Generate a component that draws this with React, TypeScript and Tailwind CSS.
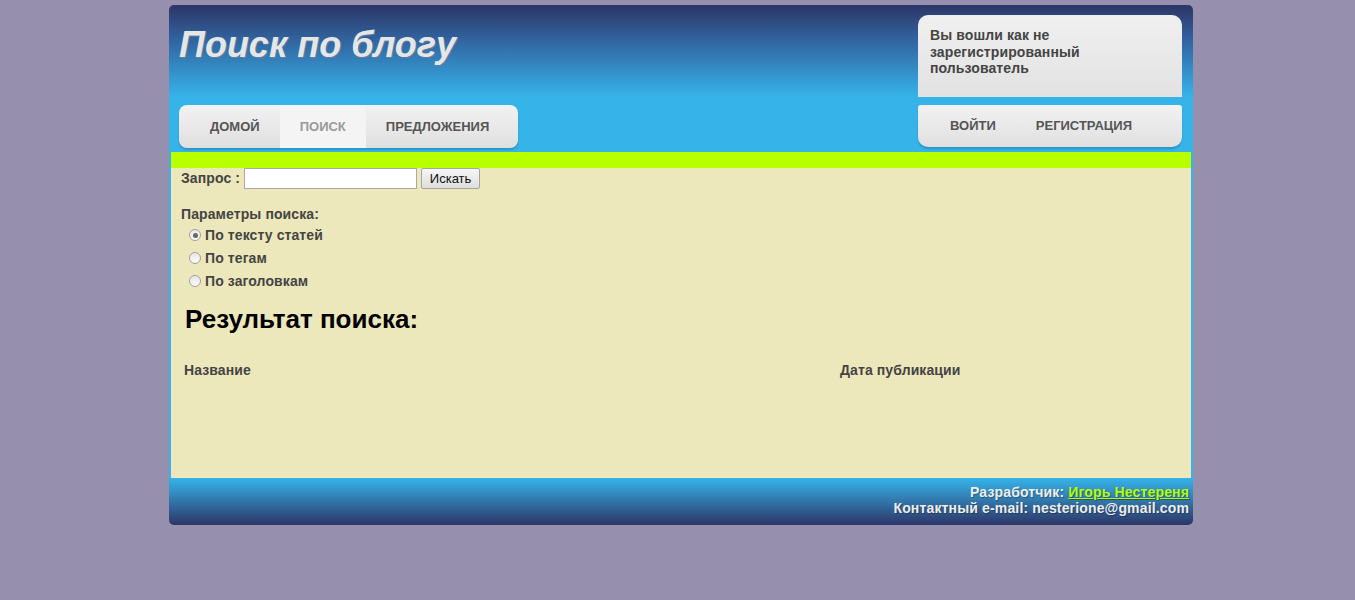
import React from "react";

export default function App() {
  const font = { fontFamily: '"Liberation Sans", Arial, sans-serif' };
  return (
    <div className="min-h-[600px] w-full bg-[#968fae] pt-[5px]" style={font}>
      <div className="ml-[169px] w-[1024px]">
        {/* Header */}
        <div className="flex h-[147px] justify-between rounded-t-[5px] bg-[linear-gradient(to_bottom,#2d3567_0px,#31649f_35px,#36b4ea_92px,#36b4ea_147px)]">
          <div className="flex flex-col pl-[10px]">
            <h1 className="mt-[18px] h-[82px] text-[36px] font-bold italic leading-[44px] text-[#e6e6e6] [text-shadow:1px_1px_1px_#6a7fa0]">
              Поиск по блогу
            </h1>
            <nav className="flex h-[43px] items-stretch rounded-[8px] bg-[linear-gradient(to_bottom,#f2f2f2,#e0e0e0)] pl-[11px] pr-[9px] shadow-[0_2px_2px_rgba(0,0,0,0.18)]">
              <a className="flex items-center px-[20px] text-[13px] font-bold uppercase text-[#555]">Домой</a>
              <a className="flex items-center bg-[#f4f4f4] px-[20px] text-[13px] font-bold uppercase text-[#999]">Поиск</a>
              <a className="flex items-center px-[20px] text-[13px] font-bold uppercase text-[#555]">Предложения</a>
            </nav>
          </div>
          <div className="mr-[11px] flex w-[264px] flex-col pt-[10px]">
            <div className="h-[82px] rounded-t-[10px] bg-[linear-gradient(to_bottom,#f0f0f0,#e2e2e2)] px-[12px] pt-[12px] text-[14px] font-bold leading-[16.5px] tracking-[0.1px] text-[#444]">
              Вы вошли как не
              <br />
              зарегистрированный
              <br />
              пользователь
            </div>
            <nav className="mt-[8px] flex h-[42px] items-stretch rounded-b-[10px] rounded-t-[3px] bg-[linear-gradient(to_bottom,#f2f2f2,#e0e0e0)] pl-[12px] shadow-[0_2px_2px_rgba(0,0,0,0.18)]">
              <a className="flex items-center px-[20px] text-[13px] font-bold uppercase text-[#555]">Войти</a>
              <a className="flex items-center px-[20px] text-[13px] font-bold uppercase text-[#555]">Регистрация</a>
            </nav>
          </div>
        </div>

        {/* Green bar */}
        <div className="h-[16px] border-x-2 border-[#36b4ea] bg-[#b8ff00]" />

        {/* Content */}
        <div className="h-[310px] border-x-2 border-[#36b4ea] bg-[#ede8bb] px-[10px] text-[14px] font-bold tracking-[0.1px] text-[#444]">
          <div className="flex h-[21px] items-center">
            <span className="mr-[4px]">Запрос :</span>
            <input className="h-[21px] w-[173px] border border-[#a9a9a9] bg-white" />
            <button className="ml-[4px] h-[21px] w-[59px] rounded-[2px] border border-[#a5a5a5] bg-[linear-gradient(to_bottom,#f6f6f6,#dedede)] text-[13px] font-normal tracking-normal text-[#111]">
              Искать
            </button>
          </div>
          <div className="mt-[17px] leading-[16px]">Параметры поиска:</div>
          <div className="mt-[5px] flex flex-col gap-[7px] pl-[8px]">
            {["По тексту статей", "По тегам", "По заголовкам"].map((t, i) => (
              <label key={t} className="flex h-[16px] items-center">
                <span className="mr-[4px] flex h-[12px] w-[12px] items-center justify-center rounded-full border border-[#a0a0a0] bg-[linear-gradient(to_bottom,#e8e8e8,#fafafa)]">
                  {i === 0 && <span className="h-[5px] w-[5px] rounded-full bg-[#666]" />}
                </span>
                {t}
              </label>
            ))}
          </div>
          <h2 className="mt-[14px] pl-[4px] text-[26px] font-bold leading-[32px] tracking-normal text-black">Результат поиска:</h2>
          <div className="mt-[25px] flex pl-[3px]">
            <div className="w-[656px]">Название</div>
            <div>Дата публикации</div>
          </div>
        </div>

        {/* Footer */}
        <div className="flex h-[47px] flex-col items-end justify-center rounded-b-[5px] bg-[linear-gradient(to_bottom,#36b4ea,#2d3567)] pb-[4px] pr-[4px] text-[14px] font-bold leading-[16px] tracking-[0.15px] text-[#eee] [text-shadow:1px_1px_1px_rgba(0,0,0,0.3)]">
          <div>
            Разработчик: <a className="text-[#b8ff00] underline">Игорь Нестереня</a>
          </div>
          <div>Контактный e-mail: nesterione@gmail.com</div>
        </div>
      </div>
    </div>
  );
}
